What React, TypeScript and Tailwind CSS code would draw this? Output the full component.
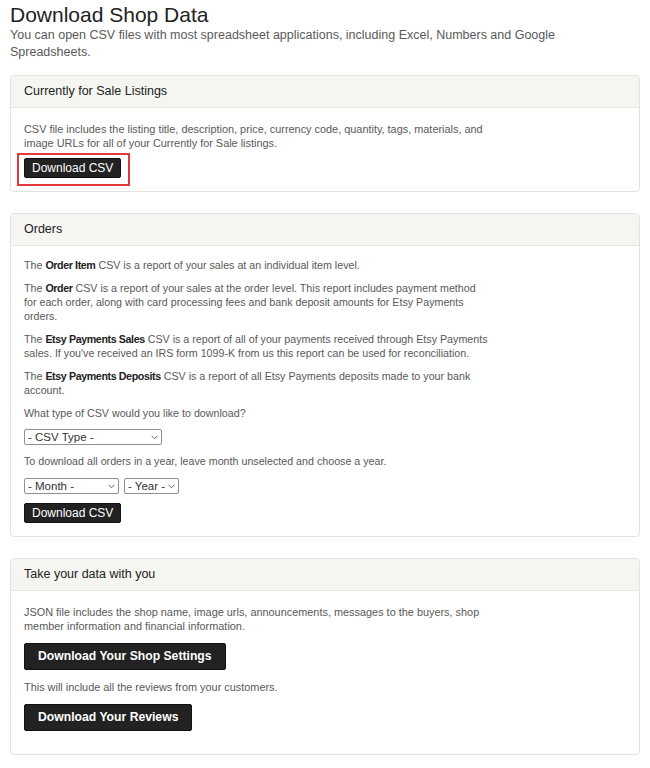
import React from "react";

function Chevron() {
  return (
    <svg width="7" height="5" viewBox="0 0 7 5" className="shrink-0">
      <path d="M0.6 0.8 L3.5 3.8 L6.4 0.8" fill="none" stroke="#555" strokeWidth="0.9" />
    </svg>
  );
}

function FakeSelect({ label, w }: { label: string; w: string }) {
  return (
    <div
      className={`${w} h-[16px] border border-[#8f8f8f] rounded-[2px] bg-white flex items-center justify-between pl-[3px] pr-[3px] text-[11.5px] leading-[14px] text-[#333]`}
    >
      <span>{label}</span>
      <Chevron />
    </div>
  );
}

function SmallButton() {
  return (
    <button className="h-[20px] px-[7px] bg-[#222222] border border-[#111] rounded-[2px] text-white text-[12px] leading-[18px] flex items-center">
      Download CSV
    </button>
  );
}

function BigButton({ children }: { children: React.ReactNode }) {
  return (
    <button className="h-[27px] px-[13px] bg-[#222222] border border-[#111] rounded-[2px] text-white text-[12.2px] font-bold leading-[25px] flex items-center">
      {children}
    </button>
  );
}

function Card({ title, children, bodyClass }: { title: string; children: React.ReactNode; bodyClass: string }) {
  return (
    <div className="border border-[#e2e2de] rounded-[4px] bg-white overflow-hidden">
      <div className="h-[32px] bg-[#f5f5f1] border-b border-[#e6e6e1] px-[13px] flex items-center text-[12.5px] text-[#222]">
        {title}
      </div>
      <div className={`px-[13px] ${bodyClass}`}>{children}</div>
    </div>
  );
}

const B = ({ children }: { children: React.ReactNode }) => (
  <span className="font-semibold tracking-[-0.4px] text-[#222]">{children}</span>
);

export default function App() {
  return (
    <div className="min-h-screen bg-white px-[10px] pt-[2px] font-['Liberation_Sans',Arial,sans-serif]">
      <h1 className="text-[21px] leading-[25px] text-[#222]">Download Shop Data</h1>
      <p className="text-[12.5px] leading-[17px] text-[#595959]">
        You can open CSV files with most spreadsheet applications, including Excel, Numbers and Google
        <br />
        Spreadsheets.
      </p>

      <div className="mt-[14px] w-[630px] flex flex-col gap-[21px]">
        <Card title="Currently for Sale Listings" bodyClass="pt-[14px] pb-[13px]">
          <p className="text-[10.9px] leading-[14px] text-[#595959]">
            CSV file includes the listing title, description, price, currency code, quantity, tags, materials, and
            <br />
            image URLs for all of your Currently for Sale listings.
          </p>
          <div className="mt-[8px] flex">
            <div className="relative">
              <SmallButton />
              <span className="absolute top-[-5px] left-[-7px] right-[-9px] bottom-[-8px] border-2 border-[#e23a3a] pointer-events-none" />
            </div>
          </div>
        </Card>

        <Card title="Orders" bodyClass="pt-[12px] pb-[13px]">
          <div className="flex flex-col gap-[9px] text-[10.7px] leading-[14px] text-[#595959]">
            <p>
              The <B>Order Item</B> CSV is a report of your sales at an individual item level.
            </p>
            <p>
              The <B>Order</B> CSV is a report of your sales at the order level. This report includes payment method
              <br />
              for each order, along with card processing fees and bank deposit amounts for Etsy Payments
              <br />
              orders.
            </p>
            <p>
              The <B>Etsy Payments Sales</B> CSV is a report of all of your payments received through Etsy Payments
              <br />
              sales. If you've received an IRS form 1099-K from us this report can be used for reconciliation.
            </p>
            <p>
              The <B>Etsy Payments Deposits</B> CSV is a report of all Etsy Payments deposits made to your bank
              <br />
              account.
            </p>
            <p>What type of CSV would you like to download?</p>
          </div>
          <div className="mt-[9px] flex">
            <FakeSelect label="- CSV Type -" w="w-[138px]" />
          </div>
          <p className="mt-[9px] text-[10.7px] leading-[14px] text-[#595959]">
            To download all orders in a year, leave month unselected and choose a year.
          </p>
          <div className="mt-[10px] flex gap-[5px]">
            <FakeSelect label="- Month -" w="w-[95px]" />
            <FakeSelect label="- Year -" w="w-[55px]" />
          </div>
          <div className="mt-[9px] flex">
            <SmallButton />
          </div>
        </Card>

        <Card title="Take your data with you" bodyClass="pt-[14px] pb-[23px]">
          <p className="text-[10.9px] leading-[14px] text-[#595959]">
            JSON file includes the shop name, image urls, announcements, messages to the buyers, shop
            <br />
            member information and financial information.
          </p>
          <div className="mt-[10px] flex">
            <BigButton>Download Your Shop Settings</BigButton>
          </div>
          <p className="mt-[10px] text-[10.9px] leading-[14px] text-[#595959]">
            This will include all the reviews from your customers.
          </p>
          <div className="mt-[10px] flex">
            <BigButton>Download Your Reviews</BigButton>
          </div>
        </Card>
      </div>
    </div>
  );
}
